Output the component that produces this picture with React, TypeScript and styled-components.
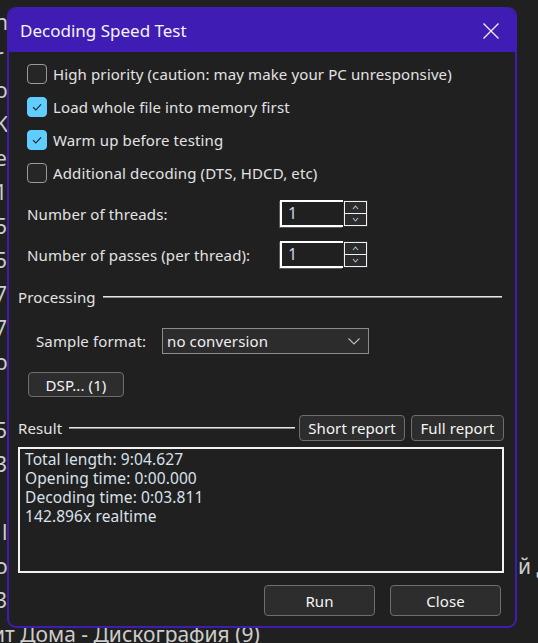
import React from 'react';
import styled, { createGlobalStyle } from 'styled-components';

const GlobalStyle = createGlobalStyle`
  html, body {
    margin: 0;
    padding: 0;
    background: #202020;
  }
  body {
    font-family: 'Noto Sans', 'DejaVu Sans', sans-serif;
    overflow: hidden;
  }
`;

const Desktop = styled.div`
  position: relative;
  width: 538px;
  height: 643px;
  overflow: hidden;
  background: #202020;
`;

/* the list window that sits behind the dialog */
const BgList = styled.ul`
  list-style: none;
  margin: 0;
  padding: 5px 0 0;
`;

const BgRow = styled.li`
  display: grid;
  grid-template-columns: 518px 1fr;
  height: 34px;
  line-height: 34px;
  font-size: 21px;
  color: #cdcdcd;
  white-space: nowrap;
  overflow: hidden;
`;

const BgText = styled.span<{ $shift?: number }>`
  margin-left: ${({ $shift }) => $shift ?? -5}px;
`;

const Dialog = styled.section`
  position: absolute;
  left: 7px;
  top: 7px;
  width: 510px;
  height: 621px;
  box-sizing: border-box;
  display: flex;
  flex-direction: column;
  border: 2px solid #3f1db4;
  border-radius: 9px;
  overflow: hidden;
  background: #202020;
  color: #e3e3e3;
  font-family: 'Noto Sans', 'DejaVu Sans', sans-serif;
  font-size: 15px;
  letter-spacing: 0.12px;
`;

const TitleBar = styled.header`
  display: flex;
  align-items: center;
  justify-content: space-between;
  flex: none;
  height: 43px;
  padding: 0 16px 0 11px;
  background: #3f1db4;
`;

const Title = styled.h1`
  margin: 0;
  font-size: 17px;
  font-weight: 400;
  letter-spacing: 0;
  color: #f4f4f4;
`;

const CloseButton = styled.button`
  display: flex;
  padding: 0;
  border: 0;
  background: none;
  cursor: pointer;
`;

const Body = styled.div`
  display: flex;
  flex-direction: column;
  padding: 5px 11px 0 9px;
`;

const Options = styled.div`
  display: flex;
  flex-direction: column;
  padding-left: 9px;
`;

const CheckRow = styled.label`
  display: flex;
  align-items: center;
  gap: 6px;
  height: 33px;
`;

const Box = styled.span<{ $checked: boolean }>`
  display: flex;
  align-items: center;
  justify-content: center;
  box-sizing: border-box;
  width: 20px;
  height: 20px;
  border-radius: 4px;
  border: 1px solid ${({ $checked }) => ($checked ? '#60cdff' : '#9a9a9a')};
  background: ${({ $checked }) => ($checked ? '#60cdff' : '#262626')};
`;

const FormGrid = styled.div`
  display: grid;
  grid-template-columns: 253px auto;
  align-items: center;
  row-gap: 14px;
  margin-top: 11px;
  padding-left: 9px;
`;

const Spinner = styled.div`
  display: flex;
`;

const Edit = styled.div`
  box-sizing: border-box;
  width: 63px;
  height: 27px;
  padding: 0 6px;
  border: 2px solid #ffffff;
  border-right: 0;
  box-shadow: -1px 1px 0 #5a5a5a;
  line-height: 23px;
  font-size: 16px;
  color: #c9d6e4;
`;

const SpinButtons = styled.div`
  display: flex;
  flex-direction: column;
  width: 25px;
  height: 27px;
  box-sizing: border-box;
  border: 1px solid #2e2e2e;
`;

const SpinButton = styled.span`
  display: flex;
  flex: 1;
  align-items: center;
  justify-content: center;
  border: 1px solid #f2f2f2;
  background: #2b2b2b;

  & + & {
    border-top: 0;
  }
`;

const GroupHeader = styled.div<{ $gap: number }>`
  display: flex;
  align-items: center;
  height: 26px;
  margin-top: ${({ $gap }) => $gap}px;
`;

const Rule = styled.span<{ $right: number }>`
  flex: 1;
  height: 2px;
  margin: 0 ${({ $right }) => $right}px 0 7px;
  background: linear-gradient(#e6e6e6 50%, #8c8c8c 50%);
`;

const SampleRow = styled.div`
  display: flex;
  align-items: center;
  margin-top: 18px;
  padding-left: 18px;
`;

const SampleLabel = styled.span`
  width: 126px;
`;

const Select = styled.div`
  display: flex;
  align-items: center;
  justify-content: space-between;
  box-sizing: border-box;
  width: 207px;
  height: 26px;
  padding: 0 8px 0 4px;
  border: 1px solid #8c8c8c;
  background: #2c2c2c;
  color: #f0f0f0;
`;

const Button = styled.button<{ $width: number }>`
  box-sizing: border-box;
  width: ${({ $width }) => $width}px;
  height: 100%;
  padding: 0;
  border: 1px solid #6e6e6e;
  border-radius: 4px;
  background: #2d2d2d;
  color: #f5f5f5;
  font-family: inherit;
  font-size: 15px;
  letter-spacing: 0.1px;
`;

const DspRow = styled.div`
  display: flex;
  height: 25px;
  margin-top: 18px;
  padding-left: 10px;
`;

const ReportButtons = styled.div`
  display: flex;
  gap: 6px;
  height: 26px;
`;

const ResultBox = styled.pre`
  box-sizing: border-box;
  height: 126px;
  margin: 6px 0 0;
  padding: 1px 5px;
  border: 2px solid #f2f2f2;
  font-family: inherit;
  font-size: 15.5px;
  letter-spacing: 0.1px;
  line-height: 19px;
  color: #d9e1ea;
`;

const Footer = styled.div`
  display: flex;
  justify-content: flex-end;
  gap: 15px;
  height: 31px;
  margin-top: 12px;
  padding-right: 3px;
`;

const Check = () => (
  <svg width="12" height="10" viewBox="0 0 12 10">
    <path d="M2 5.2 L4.8 8 L10 2.4" fill="none" stroke="#1b1b1b" strokeWidth="1.1" />
  </svg>
);

const Arrow = ({ up }: { up?: boolean }) => (
  <svg width="7" height="5" viewBox="0 0 7 5">
    <path
      d={up ? 'M1 4 L3.5 1 L6 4' : 'M1 1 L3.5 4 L6 1'}
      fill="none"
      stroke="#a9c2dc"
      strokeWidth="1.1"
    />
  </svg>
);

const options = [
  { label: 'High priority (caution: may make your PC unresponsive)', checked: false },
  { label: 'Load whole file into memory first', checked: true },
  { label: 'Warm up before testing', checked: true },
  { label: 'Additional decoding (DTS, HDCD, etc)', checked: false },
];

const bgRows: { left: string; right?: string; shift?: number }[] = [
  { left: 'n' },
  { left: 'r' },
  { left: 'o' },
  { left: 'K' },
  { left: 'e' },
  { left: '1' },
  { left: '5' },
  { left: '5' },
  { left: '7' },
  { left: '7' },
  { left: 'o' },
  { left: '' },
  { left: '5' },
  { left: '3' },
  { left: '' },
  { left: 'l', shift: 2 },
  { left: 'o', right: 'й Дмитрий' },
  { left: '3' },
  { left: 'ит Дома - Дискография (9)', shift: -8 },
];

const results = [
  'Total length: 9:04.627',
  'Opening time: 0:00.000',
  'Decoding time: 0:03.811',
  '142.896x realtime',
];

export default function App() {
  return (
    <Desktop>
      <GlobalStyle />
      <BgList>
        {bgRows.map((row, i) => (
          <BgRow key={i}>
            <BgText $shift={row.shift}>{row.left}</BgText>
            <span>{row.right}</span>
          </BgRow>
        ))}
      </BgList>

      <Dialog>
        <TitleBar>
          <Title>Decoding Speed Test</Title>
          <CloseButton aria-label="Close">
            <svg width="16" height="16" viewBox="0 0 16 16">
              <path d="M0.5 0.5 L15.5 15.5 M15.5 0.5 L0.5 15.5" stroke="#f2f2f2" strokeWidth="1.3" />
            </svg>
          </CloseButton>
        </TitleBar>

        <Body>
          <Options>
            {options.map(o => (
              <CheckRow key={o.label}>
                <Box $checked={o.checked}>{o.checked && <Check />}</Box>
                {o.label}
              </CheckRow>
            ))}
          </Options>

          <FormGrid>
            <span>Number of threads:</span>
            <Spinner>
              <Edit>1</Edit>
              <SpinButtons>
                <SpinButton><Arrow up /></SpinButton>
                <SpinButton><Arrow /></SpinButton>
              </SpinButtons>
            </Spinner>
            <span>Number of passes (per thread):</span>
            <Spinner>
              <Edit>1</Edit>
              <SpinButtons>
                <SpinButton><Arrow up /></SpinButton>
                <SpinButton><Arrow /></SpinButton>
              </SpinButtons>
            </Spinner>
          </FormGrid>

          <GroupHeader $gap={16}>
            Processing
            <Rule $right={2} />
          </GroupHeader>

          <SampleRow>
            <SampleLabel>Sample format:</SampleLabel>
            <Select>
              no conversion
              <svg width="12" height="7" viewBox="0 0 12 7">
                <path d="M0.5 0.5 L6 6 L11.5 0.5" fill="none" stroke="#bdbdbd" strokeWidth="1.1" />
              </svg>
            </Select>
          </SampleRow>

          <DspRow>
            <Button $width={96}>DSP... (1)</Button>
          </DspRow>

          <GroupHeader $gap={18}>
            Result
            <Rule $right={4} />
            <ReportButtons>
              <Button $width={106}>Short report</Button>
              <Button $width={93}>Full report</Button>
            </ReportButtons>
          </GroupHeader>

          <ResultBox>{results.join('\n')}</ResultBox>

          <Footer>
            <Button $width={111}>Run</Button>
            <Button $width={111}>Close</Button>
          </Footer>
        </Body>
      </Dialog>
    </Desktop>
  );
}
